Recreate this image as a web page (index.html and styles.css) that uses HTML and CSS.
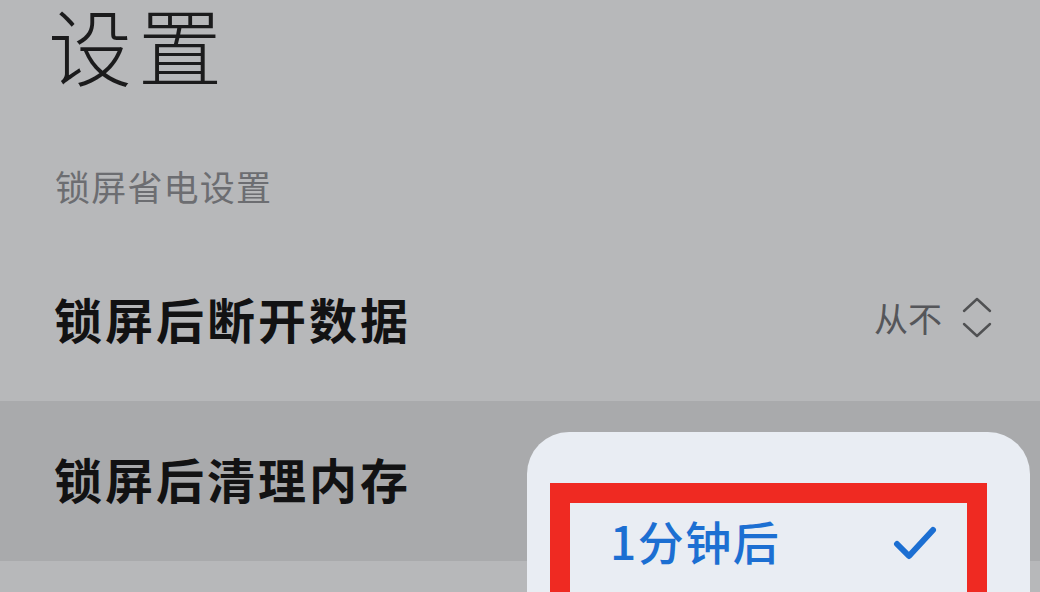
FILE: index.html
```html
<!DOCTYPE html>
<html lang="zh-CN">
<head>
<meta charset="utf-8">
<title>设置</title>
<link rel="stylesheet" href="styles.css">
</head>
<body>
<div class="page">
  <h1 class="title">设置</h1>
  <div class="section">锁屏省电设置</div>
  <div class="row">
    <span class="label">锁屏后断开数据</span>
    <span class="value">从不
      <svg class="chev" width="30" height="42" viewBox="0 0 30 42"><path d="M2 15 L15 3 L28 15 M2 28 L15 40 L28 28" fill="none" stroke="#505153" stroke-width="2.4" stroke-linecap="round" stroke-linejoin="round"/></svg>
    </span>
  </div>
  <div class="row active">
    <span class="label">锁屏后清理内存</span>
  </div>
  <div class="row last"></div>
  <div class="popup">
    <div class="mark">
      <div class="option">
        <span class="opt-text">1分钟后</span>
        <svg class="check" width="44" height="36" viewBox="0 0 44 36"><path d="M4 19 L16 31 L40 5" fill="none" stroke="#1c6fd2" stroke-width="6" stroke-linecap="round" stroke-linejoin="round"/></svg>
      </div>
    </div>
  </div>
</div>
</body>
</html>
```
FILE: styles.css
```css
html, body {
  margin: 0;
  padding: 0;
}
body {
  width: 1040px;
  height: 592px;
  overflow: hidden;
  background: #b7b8ba;
  font-family: "Noto Sans CJK SC", "Noto Sans", sans-serif;
}
.page {
  position: relative;
  display: flex;
  flex-direction: column;
  height: 592px;
  overflow: hidden;
}
.title {
  margin: 0;
  padding-left: 48px;
  font-family: "Liberation Sans", "Noto Sans CJK SC", sans-serif;
  font-size: 84px;
  line-height: 102px;
  height: 88px;
  font-weight: 300;
  letter-spacing: 6px;
  color: #1b1b1c;
}
.section {
  margin-top: 78px;
  padding-left: 55px;
  font-size: 35px;
  line-height: 40px;
  color: #6c6d71;
  letter-spacing: 1.2px;
}
.row {
  flex: 0 0 160px;
  display: flex;
  align-items: center;
  justify-content: space-between;
  padding: 0 48px 0 54px;
}
.row.last {
  flex: 1 1 auto;
}
.section + .row {
  margin-top: 35px;
}
.row.active {
  background: #a9aaac;
}
.label {
  font-size: 48px;
  font-weight: 700;
  letter-spacing: 3px;
  color: #121213;
  margin-top: -6px;
}
.value {
  display: flex;
  align-items: center;
  gap: 20px;
  font-size: 34px;
  color: #55565a;
  margin-top: -8px;
}
.chev {
  display: block;
}
.popup {
  position: absolute;
  left: 527px;
  top: 432px;
  width: 503px;
  height: 160px;
  overflow: hidden;
  background: #e9edf3;
  border-radius: 42px 42px 0 0;
  padding: 51px 0 0 23px;
  box-sizing: border-box;
}
.mark {
  width: 437px;
  height: 140px;
  border: 20px solid #ef2a22;
  box-sizing: border-box;
}
.option {
  display: flex;
  align-items: center;
  justify-content: space-between;
  padding: 4px 30px 0 40px;
}
.opt-text {
  font-size: 46px;
  font-weight: 500;
  color: #1c6fd2;
  letter-spacing: 1.5px;
}
.check {
  display: block;
  margin-top: 6px;
}
```
